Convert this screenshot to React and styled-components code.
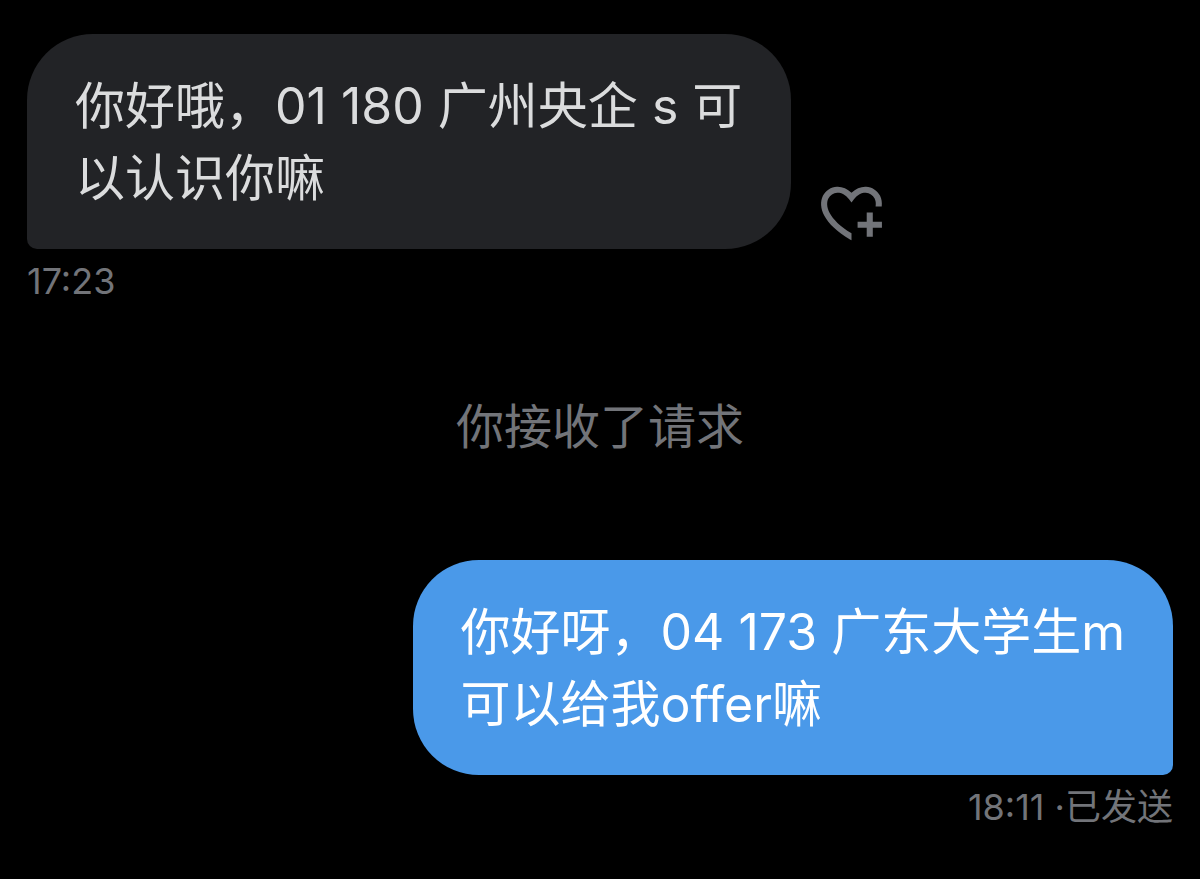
import React from "react";
import styled, { createGlobalStyle } from "styled-components";

const GlobalStyles = createGlobalStyle`
body {
margin: 0;
background-color: #000000;
font-family: Inter, "Noto Sans CJK SC", sans-serif;
}
`;

const Conversation = styled.main`
display: flex;
flex-direction: column;
padding: 34px 27px;
`;

const MessageContainer = styled.article`
display: flex;
flex-direction: column;
align-items: ${props => (props.$own ? "flex-end" : "flex-start")};
`;

const MessageRow = styled.div`
display: flex;
align-items: flex-end;
gap: 24px;
width: 100%;
justify-content: ${props => (props.$own ? "flex-end" : "flex-start")};
`;

const MessageBox = styled.div`
box-sizing: border-box;
max-width: 66.67%;
padding: 36px 48px 35px;
border-radius: ${props => (props.$own ? "66px 66px 10px 66px" : "66px 66px 66px 10px")};
background-color: ${props => (props.$own ? "#4a99e9" : "#222326")};
color: ${props => (props.$own ? "#ffffff" : "#dbdcdd")};
`;

const MessageText = styled.p`
margin: 0;
font-size: 50px;
line-height: 72px;
white-space: pre-line;
`;

const MessageInfo = styled.p`
margin: 10px 0 0;
font-size: 36px;
line-height: 44px;
color: #727479;
`;

const Notice = styled.p`
margin: 92px 0 101px;
font-size: 48px;
line-height: 64px;
text-align: center;
color: #727479;
`;

const ReactionButton = styled.button`
display: flex;
flex-shrink: 0;
padding: 0;
border: none;
background: none;
color: #727479;
cursor: pointer;
`;

const HeartPlus = () => (
    <svg width="73" height="73" viewBox="0 0 24 24" fill="currentColor" aria-hidden="true">
        <path d="M17 12v3h-2.998v2h3v3h2v-3h3v-2h-3.001v-3H17zm-5 6.839c-3.871-2.34-6.053-4.639-7.127-6.609-1.112-2.04-1.031-3.7-.479-4.82.561-1.13 1.667-1.84 2.91-1.91 1.222-.06 2.68.51 3.892 2.16l.806 1.09.805-1.09c1.211-1.65 2.668-2.22 3.89-2.16 1.242.07 2.347.78 2.908 1.91.334.677.49 1.554.321 2.59h2.011c.153-1.283-.039-2.469-.539-3.48-.887-1.79-2.647-2.91-4.601-3.01-1.65-.09-3.367.56-4.796 2.01-1.43-1.45-3.147-2.1-4.798-2.01-1.954.1-3.714 1.22-4.601 3.01-.896 1.81-.846 4.17.514 6.67 1.353 2.48 4.003 5.12 8.382 7.67l.502.299v-2.32z" />
    </svg>
);

const Message = ({ text, info, own }) => (
    <MessageContainer $own={own}>
        <MessageRow $own={own}>
            <MessageBox $own={own}>
                <MessageText>{text}</MessageText>
            </MessageBox>
            {/* only received messages can be reacted to */}
            {!own && (
                <ReactionButton type="button">
                    <HeartPlus />
                </ReactionButton>
            )}
        </MessageRow>
        <MessageInfo>{info}</MessageInfo>
    </MessageContainer>
);

const App = () => (
    <>
        <GlobalStyles />
        <Conversation lang="zh-CN">
            <Message text="你好哦，01 180 广州央企 s 可以认识你嘛" info="17:23" />
            <Notice>你接收了请求</Notice>
            <Message own text={"你好呀，04 173 广东大学生m\n可以给我offer嘛"} info="18:11 ·已发送" />
        </Conversation>
    </>
);

export default App;
